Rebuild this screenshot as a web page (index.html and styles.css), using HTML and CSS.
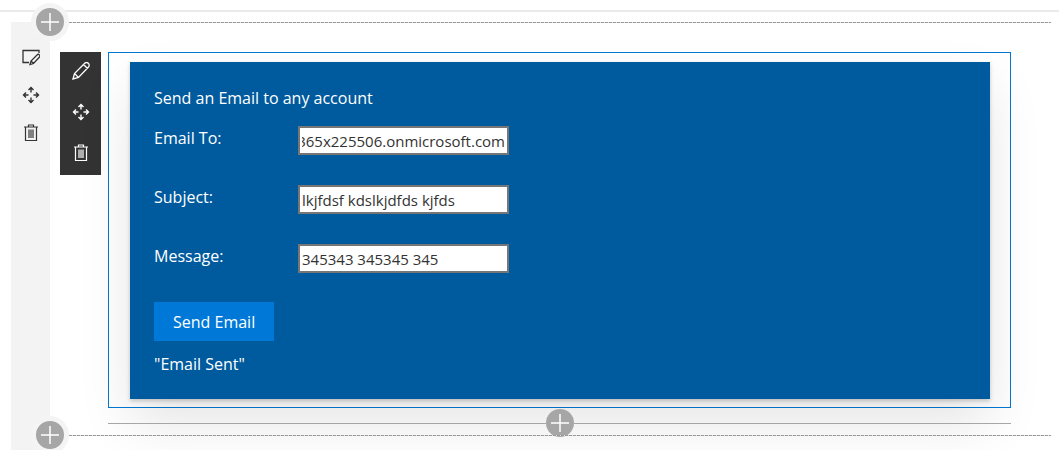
FILE: index.html
```html
<!DOCTYPE html>
<html lang="en">
<head>
<meta charset="utf-8">
<title>Send Email web part</title>
<link rel="stylesheet" href="styles.css">
</head>
<body>
<svg class="sprite" aria-hidden="true">
  <symbol id="plus" viewBox="0 0 28 28"><path d="M14 5v18M5 14h18"/></symbol>
  <symbol id="move" viewBox="0 0 18 18"><path d="M9 2v4.500M9 11.500v4.500M2 9h4.500M11.500 9h4.500M6.500 4L9 1.500 11.500 4M6.500 14L9 16.500 11.500 14M4 6.500L1.500 9 4 11.500M14 6.500L16.500 9 14 11.500" stroke-width="1.400"/></symbol>
  <symbol id="trash" viewBox="0 0 18 18"><path d="M2 3h14M6.500 3v-2h5v2M3.500 3v13.500h11V3M7 5.500v8.500M9 5.500v8.500M11 5.500v8.500" stroke-width="1.200"/></symbol>
  <symbol id="pencil" viewBox="0 0 18 18"><path d="M1 17l1.500-5.500L12.500 1.500a2.200 2.200 0 0 1 4 3.500L6.500 15.500zM2.500 11.500l4 4M11.500 2.500l4 4" stroke-width="1.300"/></symbol>
  <symbol id="section" viewBox="0 0 18 18"><path d="M7 14.500H1v-12h16V5M8 16.500l1-3.500 6-6a1.500 1.500 0 0 1 2.500 2L11.500 15.500zM9 13l2.500 2.500" stroke-width="1.300"/></symbol>
</svg>
<header class="topbar"></header>
<main class="canvas">
  <div class="divider"><button class="add ring" aria-label="Add a new section"><svg><use href="#plus"/></svg></button></div>
  <section class="section">
    <div class="rail">
      <button class="tool" aria-label="Edit section"><svg><use href="#section"/></svg></button>
      <button class="tool" aria-label="Move section"><svg><use href="#move"/></svg></button>
      <button class="tool" aria-label="Delete section"><svg><use href="#trash"/></svg></button>
    </div>
    <div class="part">
      <div class="part-tools">
        <button class="tool" aria-label="Edit web part"><svg><use href="#pencil"/></svg></button>
        <button class="tool" aria-label="Move web part"><svg><use href="#move"/></svg></button>
        <button class="tool" aria-label="Delete web part"><svg><use href="#trash"/></svg></button>
      </div>
      <div class="part-column">
        <div class="part-frame">
          <form class="card">
            <p class="title">Send an Email to any account</p>
            <div class="fields">
              <label for="to">Email To:</label>
              <input class="end" id="to" type="text" value="M365x225506.onmicrosoft.com">
              <label for="subject">Subject:</label>
              <input id="subject" type="text" value="lkjfdsf kdslkjdfds kjfds">
              <label for="message">Message:</label>
              <input id="message" type="text" value="345343 345345 345">
            </div>
            <button class="send" type="button">Send Email</button>
            <p class="status">"Email Sent"</p>
          </form>
        </div>
        <div class="insert"><button class="add" aria-label="Add a new web part"><svg><use href="#plus"/></svg></button></div>
      </div>
    </div>
  </section>
  <div class="divider"><button class="add ring" aria-label="Add a new section"><svg><use href="#plus"/></svg></button></div>
  <div class="section next"><div class="rail"></div></div>
</main>
</body>
</html>
```
FILE: styles.css
```css
* { box-sizing: border-box; }
body {
  margin: 0;
  min-height: 100vh;
  display: flex;
  flex-direction: column;
  overflow: hidden;
  background: #fff;
  color: #333;
  font: 16px/24px "Open Sans", "Noto Sans", sans-serif;
}
p { margin: 0; }
button { padding: 0; border: 0; font: inherit; }
.sprite { position: absolute; width: 0; height: 0; }
svg { display: block; fill: none; stroke: currentColor; }
.topbar {
  height: 12px;
  border-bottom: 2px solid #eaeaea;
}
.canvas {
  flex: 1;
  display: flex;
  flex-direction: column;
  padding: 10px 8px 0 11px;
}
.divider {
  height: 0;
  display: flex;
  align-items: center;
  padding-left: 20px;
  position: relative;
  z-index: 2;
}
.divider::after {
  content: "";
  flex: 1;
  height: 1px;
  background: repeating-linear-gradient(90deg, #999 0 3px, #ddd 3px 4px);
}
.add {
  flex: none;
  width: 28px;
  height: 28px;
  border-radius: 50%;
  background: #a6a6a6;
  color: #fff;
}
.add svg { width: 28px; height: 28px; stroke-width: 1.5; }
.ring {
  width: 38px;
  height: 38px;
  border: 5px solid #f4f4f4;
}
.section { display: flex; }
.rail {
  flex: none;
  width: 39px;
  background: #f3f3f3;
  display: flex;
  flex-direction: column;
  align-items: center;
  gap: 20px;
  padding-top: 26px;
}
.tool {
  width: 18px;
  height: 18px;
  background: none;
  color: #333;
}
.tool svg { width: 18px; height: 18px; }
.part {
  flex: 1;
  display: flex;
  align-items: flex-start;
  gap: 7px;
  padding: 30px 40px 12px 10px;
}
.part-tools {
  flex: none;
  width: 41px;
  background: #333;
  display: flex;
  flex-direction: column;
  align-items: center;
  gap: 23px;
  padding: 10px 0 13px;
}
.part-tools .tool { color: #fff; }
.part-column { flex: 1; }
.part-frame { border: 1px solid #0078d4; padding: 9px 20px 8px 21px; }
.card {
  padding: 24px 24px 23px;
  background: #005a9e;
  color: #fff;
  box-shadow: 0 2px 4px rgba(0, 0, 0, .2), 0 25px 50px rgba(0, 0, 0, .1);
}
.fields {
  display: grid;
  grid-template-columns: 144px 211px;
  row-gap: 30px;
  margin: 16px 0 29px;
}
.fields input {
  min-width: 0;
  height: 29px;
  padding: 0 2px;
  border: 2px solid #767676;
  border-radius: 0;
  background: #fff;
  color: #333;
  font: inherit;
  font-size: 15px;
}
.fields .end { direction: rtl; }
.send {
  display: block;
  height: 39px;
  padding: 0 19px;
  background: #0078d7;
  color: #fff;
}
.status { margin-top: 11px; }
.insert {
  height: 0;
  margin-top: 15px;
  display: flex;
  align-items: center;
}
.insert::before, .insert::after { content: ""; flex: 1; border-top: 1px solid #a6a6a6; }
.next { flex: 1; }
```
